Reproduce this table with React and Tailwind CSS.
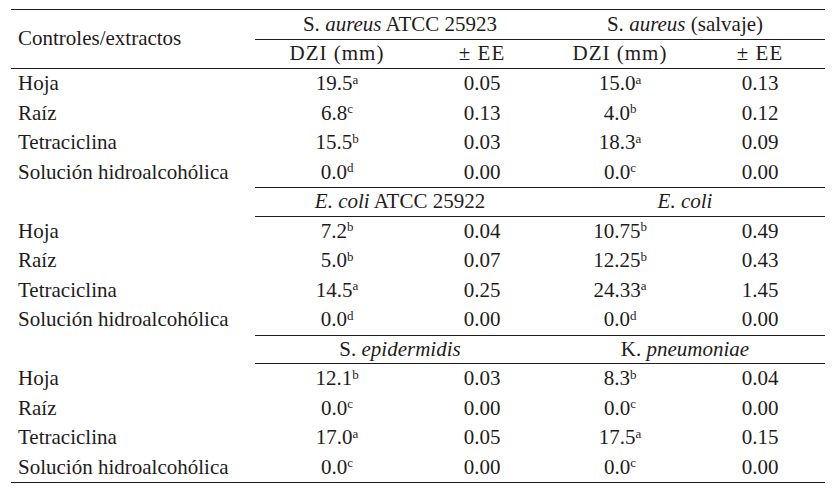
const groups = [
  {
    headers: [
      <>S. <i>aureus</i> ATCC 25923</>,
      <>S. <i>aureus</i> (salvaje)</>,
    ],
    rows: [
      ["Hoja", "19.5", "a", "0.05", "15.0", "a", "0.13"],
      ["Raíz", "6.8", "c", "0.13", "4.0", "b", "0.12"],
      ["Tetraciclina", "15.5", "b", "0.03", "18.3", "a", "0.09"],
      ["Solución hidroalcohólica", "0.0", "d", "0.00", "0.0", "c", "0.00"],
    ],
  },
  {
    headers: [
      <><i>E. coli</i> ATCC 25922</>,
      <><i>E. coli</i></>,
    ],
    rows: [
      ["Hoja", "7.2", "b", "0.04", "10.75", "b", "0.49"],
      ["Raíz", "5.0", "b", "0.07", "12.25", "b", "0.43"],
      ["Tetraciclina", "14.5", "a", "0.25", "24.33", "a", "1.45"],
      ["Solución hidroalcohólica", "0.0", "d", "0.00", "0.0", "d", "0.00"],
    ],
  },
  {
    headers: [
      <>S. <i>epidermidis</i></>,
      <>K. <i>pneumoniae</i></>,
    ],
    rows: [
      ["Hoja", "12.1", "b", "0.03", "8.3", "b", "0.04"],
      ["Raíz", "0.0", "c", "0.00", "0.0", "c", "0.00"],
      ["Tetraciclina", "17.0", "a", "0.05", "17.5", "a", "0.15"],
      ["Solución hidroalcohólica", "0.0", "c", "0.00", "0.0", "c", "0.00"],
    ],
  },
];

const cell = "h-[29.5px] flex items-center justify-center";

const Value = ({ v, s }) => (
  <span>
    {v}
    <sup className="text-[13px]">{s}</sup>
  </span>
);

const DataRow = ({ r }) => (
  <>
    <div className="h-[29.5px] flex items-center pl-[7px]">{r[0]}</div>
    <div className={cell}><Value v={r[1]} s={r[2]} /></div>
    <div className={cell}>{r[3]}</div>
    <div className={cell}><Value v={r[4]} s={r[5]} /></div>
    <div className={cell}>{r[6]}</div>
  </>
);

export default function App() {
  return (
    <div className="w-[840px] h-[490px] bg-white pt-[9px] pl-[11px] font-['Liberation_Serif'] text-[21px] text-[#1f1b1c]">
      <div className="w-[814px] grid grid-cols-[244px_164px_126px_150px_130px] border-y border-[#1f1b1c]">
        {groups.map((g, gi) => (
          <div key={gi} className="contents">
            {gi === 0 ? (
              <>
                <div className="row-span-2 h-[59px] flex items-center pl-[7px] border-b border-[#1f1b1c]">
                  Controles/extractos
                </div>
                <div className={`${cell} col-span-2 border-b border-[#1f1b1c] pt-px`}><span>{g.headers[0]}</span></div>
                <div className={`${cell} col-span-2 border-b border-[#1f1b1c] pt-px`}><span>{g.headers[1]}</span></div>
                <div className={`${cell} border-b border-[#1f1b1c]`}><span className="tracking-[1px]">DZI (mm)</span></div>
                <div className={`${cell} border-b border-[#1f1b1c]`}><span className="tracking-[1px]">± EE</span></div>
                <div className={`${cell} border-b border-[#1f1b1c]`}><span className="tracking-[1px]">DZI (mm)</span></div>
                <div className={`${cell} border-b border-[#1f1b1c]`}><span className="tracking-[1px]">± EE</span></div>
              </>
            ) : (
              <>
                <div className="h-[29.5px]" />
                <div className={`${cell} col-span-2 border-y border-[#1f1b1c]`}><span>{g.headers[0]}</span></div>
                <div className={`${cell} col-span-2 border-y border-[#1f1b1c]`}><span>{g.headers[1]}</span></div>
              </>
            )}
            {g.rows.map((r, ri) => (
              <DataRow key={ri} r={r} />
            ))}
          </div>
        ))}
      </div>
    </div>
  );
}
